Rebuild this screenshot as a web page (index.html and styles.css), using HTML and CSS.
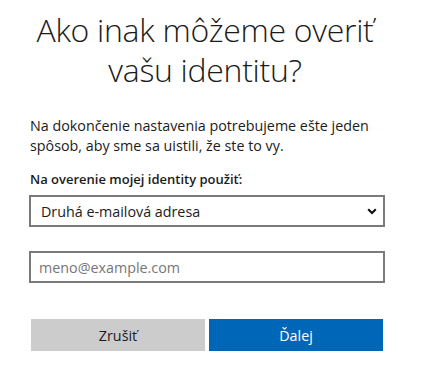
FILE: index.html
```html
<!DOCTYPE html>
<html lang="sk">
<head>
  <meta charset="UTF-8">
  <title>Overenie identity</title>
  <link rel="stylesheet" href="styles.css">
</head>
<body>
  <div class="panel">
    <h1 class="title">Ako inak môžeme overiť vašu identitu?</h1>
    <p class="intro">Na dokončenie nastavenia potrebujeme ešte jeden spôsob, aby sme sa uistili, že ste to vy.</p>
    <div class="label">Na overenie mojej identity použiť:</div>
    <div class="select">
      <span>Druhá e-mailová adresa</span>
      <svg class="chevron" width="10" height="7" viewBox="0 0 10 7">
        <path d="M1.2 1.3 L5 5 L8.8 1.3" fill="none" stroke="#111" stroke-width="2.2"/>
      </svg>
    </div>
    <div class="field">meno@example.com</div>
    <div class="buttons">
      <div class="btn btn-cancel">Zrušiť</div>
      <div class="btn btn-next">Ďalej</div>
    </div>
  </div>
</body>
</html>
```

FILE: styles.css
```css
* {
  box-sizing: border-box;
}

body {
  margin: 0;
  background: #fff;
  font-family: "Open Sans", "Noto Sans", sans-serif;
  color: #1b1b1b;
}

.panel {
  width: 434px;
  padding: 10px 49px 0 29px;
}

.title {
  margin: 0 0 0 -14px;
  width: 380px;
  text-align: center;
  font-weight: 300;
  font-size: 32px;
  line-height: 40px;
  color: #1b1b1b;
  letter-spacing: -0.3px;
}

.intro {
  margin: 26px 0 0 1px;
  font-size: 14.3px;
  line-height: 20px;
  color: #1b1b1b;
}

.label {
  margin: 14px 0 0 1px;
  font-size: 13px;
  font-weight: 600;
  line-height: 18px;
}

.select {
  margin-top: 7px;
  height: 32px;
  border: 2px solid #7a7a7a;
  display: flex;
  align-items: center;
  justify-content: space-between;
  padding: 0 6px 0 10px;
  font-size: 14.3px;
}

.chevron {
  display: block;
}

.field {
  margin-top: 24px;
  height: 32px;
  border: 2px solid #7a7a7a;
  display: flex;
  align-items: center;
  padding: 0 8px;
  font-size: 14.3px;
  color: #767676;
}

.buttons {
  margin: 36px 2px 0;
  display: flex;
  gap: 4px;
}

.btn {
  flex: 1;
  height: 32px;
  display: flex;
  align-items: center;
  justify-content: center;
  font-size: 14.3px;
}

.btn-cancel {
  background: #cccccc;
  color: #1b1b1b;
}

.btn-next {
  background: #0067b8;
  color: #fff;
}
```
